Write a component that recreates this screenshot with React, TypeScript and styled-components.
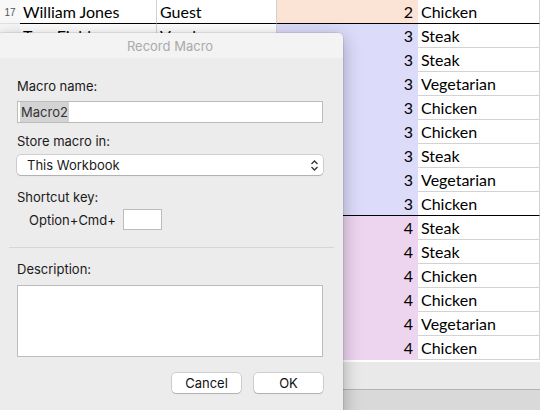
import React from 'react'
import styled, { createGlobalStyle } from 'styled-components'

type Fill = 'white' | 'peach' | 'lavender' | 'pink'

type SheetRow = {
    num?: string
    name?: string
    kind?: string
    group: string
    meal: string
    fill: Fill
    edge?: boolean
}

const fills: Record<Fill, string> = {
    white: '#ffffff',
    peach: '#fbe3d6',
    lavender: '#dcdcfa',
    pink: '#edd4ef',
}

// rows below 18 sit under the dialog, so their name columns stay empty
const rows: SheetRow[] = [
    { num: '17', name: 'William Jones', kind: 'Guest', group: '2', meal: 'Chicken', fill: 'peach', edge: true },
    { name: 'Tom Fields', kind: 'Vendor', group: '3', meal: 'Steak', fill: 'lavender' },
    { group: '3', meal: 'Steak', fill: 'lavender' },
    { group: '3', meal: 'Vegetarian', fill: 'lavender' },
    { group: '3', meal: 'Chicken', fill: 'lavender' },
    { group: '3', meal: 'Chicken', fill: 'lavender' },
    { group: '3', meal: 'Steak', fill: 'lavender' },
    { group: '3', meal: 'Vegetarian', fill: 'lavender' },
    { group: '3', meal: 'Chicken', fill: 'lavender', edge: true },
    { group: '4', meal: 'Steak', fill: 'pink' },
    { group: '4', meal: 'Steak', fill: 'pink' },
    { group: '4', meal: 'Chicken', fill: 'pink' },
    { group: '4', meal: 'Chicken', fill: 'pink' },
    { group: '4', meal: 'Vegetarian', fill: 'pink' },
    { group: '4', meal: 'Chicken', fill: 'pink' },
]

const Chevrons = () => (
    <svg width="9" height="13" viewBox="0 0 9 13">
        <path d="M1.5 5 L4.5 2 L7.5 5" fill="none" stroke="#333" strokeWidth="1.3" />
        <path d="M1.5 8 L4.5 11 L7.5 8" fill="none" stroke="#333" strokeWidth="1.3" />
    </svg>
)

const App = () => {
  return (
    <>
        <GlobalStyle />
        <Page>
            <Sheet>
                {rows.map((r, i) => (
                    <Row key={i}>
                        <Header>{r.num}</Header>
                        <Cell $edge={r.edge} $lined>{r.name}</Cell>
                        <Cell $edge={r.edge} $lined>{r.kind}</Cell>
                        <Cell $edge={r.edge} $fill={r.fill} $right>{r.group}</Cell>
                        <Cell $edge={r.edge} $lined>{r.meal}</Cell>
                    </Row>
                ))}
            </Sheet>
            <TabStrip />
            <StatusStrip />

            <Dialog>
                <TitleBar>Record Macro</TitleBar>
                <Body>
                    <Label $top={0}>Macro name:</Label>
                    <TextField $top={7}>
                        <Selected>Macro2</Selected>
                    </TextField>
                    <Label $top={10}>Store macro in:</Label>
                    <Select $top={6}>
                        <span>This Workbook</span>
                        <Chevrons />
                    </Select>
                    <Label $top={14}>Shortcut key:</Label>
                    <ShortcutRow>
                        <span>Option+Cmd+</span>
                        <KeyBox />
                    </ShortcutRow>
                    <Separator />
                    <Label $top={13}>Description:</Label>
                    <TextArea />
                    <Buttons>
                        <Button>Cancel</Button>
                        <Button>OK</Button>
                    </Buttons>
                </Body>
            </Dialog>
        </Page>
    </>
  )
}

export default App

const GlobalStyle = createGlobalStyle`
    html, body {
        margin: 0;
        padding: 0;
        background: #ffffff;
        overflow: hidden;
    }
`
const Page = styled.div`
    position: relative;
    width: 540px;
    height: 410px;
    overflow: hidden;
    background: #d9d9d9;
`
const Sheet = styled.div`
    display: flex;
    flex-direction: column;
    background: #ffffff;
    padding-bottom: 2px;
`
const Row = styled.div`
    display: grid;
    grid-template-columns: 20px 137px 120px 141px 122px;
    height: 24px;
`
const Header = styled.div`
    box-sizing: border-box;
    background: #f8f8f8;
    border-bottom: 1px solid #e2e2e2;
    font-family: "Liberation Sans", Arial, sans-serif;
    font-size: 10px;
    color: #555;
    display: flex;
    align-items: center;
    justify-content: center;
    padding-top: 2px;
`
const Cell = styled.div<{ $fill?: Fill; $edge?: boolean; $lined?: boolean; $right?: boolean }>`
    box-sizing: border-box;
    background: ${p => fills[p.$fill ?? 'white']};
    border-bottom: 1px solid ${p => p.$edge ? '#000000' : p.$lined ? '#d2d2d2' : fills[p.$fill ?? 'white']};
    border-right: ${p => p.$lined ? '1px solid #d2d2d2' : 'none'};
    font-family: Lato, "Open Sans", sans-serif;
    font-size: 16px;
    color: #000;
    display: flex;
    align-items: center;
    justify-content: ${p => p.$right ? 'flex-end' : 'flex-start'};
    padding: 0 ${p => p.$right ? '5px' : '0'} 0 ${p => p.$right ? '0' : '3px'};
    white-space: nowrap;
    overflow: hidden;
`
const TabStrip = styled.div`
    height: 27px;
    background: #e9e9e9;
    border-bottom: 1px solid #b4b4b4;
`
const StatusStrip = styled.div`
    flex: 1;
    background: #d9d9d9;
`
const Dialog = styled.div`
    position: absolute;
    left: -3px;
    top: 33px;
    width: 346px;
    bottom: -10px;
    background: #ececec;
    border-radius: 5px 5px 0 0;
    box-shadow: 0 0 0 0.5px rgba(0, 0, 0, 0.15), 0 4px 18px rgba(0, 0, 0, 0.3);
    font-family: Inter, "Liberation Sans", sans-serif;
    font-size: 13px;
    color: #1a1a1a;
    display: flex;
    flex-direction: column;
`
const TitleBar = styled.div`
    height: 25px;
    border-radius: 5px 5px 0 0;
    background: #f3f3f3;
    color: #aaaaaa;
    display: flex;
    align-items: center;
    justify-content: center;
    font-size: 13px;
`
const Body = styled.div`
    display: flex;
    flex-direction: column;
    padding: 20px 20px 0 20px;
`
const Label = styled.div<{ $top: number }>`
    height: 16px;
    line-height: 16px;
    margin-top: ${p => p.$top}px;
`
const TextField = styled.div<{ $top: number }>`
    box-sizing: border-box;
    margin-top: ${p => p.$top}px;
    height: 22px;
    background: #fff;
    border: 1px solid #bcbcbc;
    display: flex;
    align-items: center;
    padding-left: 2px;
    color: #333;
`
const Selected = styled.span`
    background: #d3d3d3;
    padding: 1px 1px;
    line-height: 18px;
`
const Select = styled.div<{ $top: number }>`
    box-sizing: border-box;
    margin-top: ${p => p.$top}px;
    height: 20px;
    background: #fff;
    border-radius: 4px;
    box-shadow: 0 0 0 0.5px rgba(0, 0, 0, 0.25), 0 1px 1px rgba(0, 0, 0, 0.15);
    display: flex;
    align-items: center;
    justify-content: space-between;
    padding: 0 4px 0 10px;
`
const ShortcutRow = styled.div`
    margin-top: 4px;
    padding-left: 12px;
    display: flex;
    align-items: center;
    gap: 7px;
`
const KeyBox = styled.div`
    box-sizing: border-box;
    width: 39px;
    height: 21px;
    background: #fff;
    border: 1px solid #bcbcbc;
`
const Separator = styled.div`
    margin: 17px -11px 0 -8px;
    height: 1px;
    background: #d6d6d6;
`
const TextArea = styled.div`
    box-sizing: border-box;
    margin-top: 8px;
    height: 72px;
    background: #fff;
    border: 1px solid #bcbcbc;
`
const Buttons = styled.div`
    margin-top: 16px;
    display: flex;
    justify-content: flex-end;
    gap: 13px;
`
const Button = styled.div`
    box-sizing: border-box;
    width: 69px;
    height: 20px;
    background: #fff;
    border-radius: 4px;
    box-shadow: 0 0 0 0.5px rgba(0, 0, 0, 0.25), 0 1px 1px rgba(0, 0, 0, 0.15);
    display: flex;
    align-items: center;
    justify-content: center;
    color: #111;
`
